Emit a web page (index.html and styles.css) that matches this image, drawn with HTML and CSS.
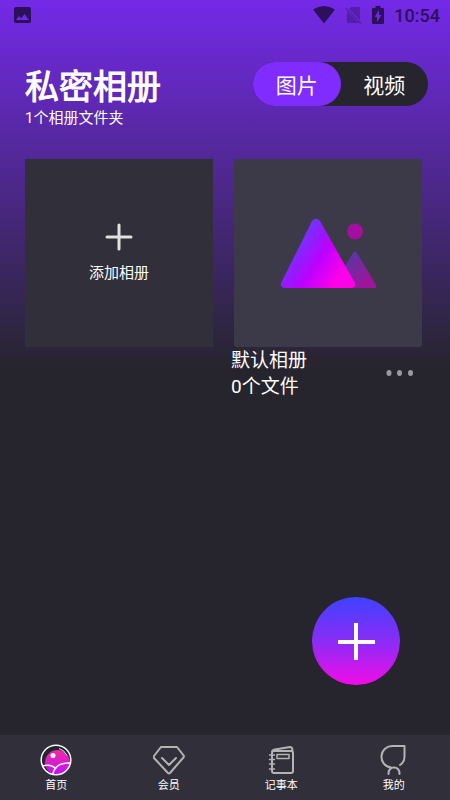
FILE: index.html
```html
<!DOCTYPE html>
<html lang="zh-CN">
<head>
<meta charset="utf-8">
<meta name="viewport" content="width=device-width, initial-scale=1">
<title>私密相册</title>
<link rel="stylesheet" href="styles.css">
</head>
<body>
<div class="app">
  <div class="status">
    <svg class="status-photo" width="17" height="16" viewBox="0 0 17 16"><path fill="currentColor" fill-rule="evenodd" d="M2 0h13q2 0 2 2v12q0 2-2 2H2q-2 0-2-2V2Q0 0 2 0zM2 13h13l-4.500-6-3.500 4.500-2-2.500z"/></svg>
    <div class="status-right">
      <svg width="22" height="18" viewBox="0 0 22 18"><path fill="currentColor" d="M0 3.500Q11-3.500 22 3.500L11 17.500z"/></svg>
      <svg class="dim" width="17" height="18" viewBox="0 0 17 18"><path fill="currentColor" d="M6 1h8q1 0 1 1v12L4 3zM2 5l12 12H3q-1 0-1-1z"/><path stroke="currentColor" stroke-width="1.500" d="M.5 2l15.500 15.500"/></svg>
      <svg width="12" height="18" viewBox="0 0 12 18"><path fill="currentColor" fill-rule="evenodd" d="M3.500 0h5v2H11q1 0 1 1v14q0 1-1 1H1q-1 0-1-1V3q0-1 1-1h2.500zM7 4l-4.500 7H5v5l4.500-7H7z"/></svg>
      <span class="clock">10:54</span>
    </div>
  </div>

  <header class="header">
    <div>
      <h1 class="title">私密相册</h1>
      <p class="subtitle">1个相册文件夹</p>
    </div>
    <div class="switch">
      <button class="switch-item active" type="button">图片</button>
      <button class="switch-item" type="button">视频</button>
    </div>
  </header>

  <main class="albums">
    <button class="add" type="button">
      <svg width="28" height="28" viewBox="0 0 28 28"><path d="M14 2v24M2 14h24" stroke="#e2e0e2" stroke-width="3" stroke-linecap="round"/></svg>
      <span>添加相册</span>
    </button>
    <section class="album">
      <div class="cover">
        <svg width="96" height="70" viewBox="0 0 96 70">
          <defs>
            <linearGradient id="big" gradientUnits="userSpaceOnUse" x1="18" y1="26" x2="62" y2="56"><stop offset="0" stop-color="#7630ff"/><stop offset=".5" stop-color="#bd00ff"/><stop offset="1" stop-color="#ff00e8"/></linearGradient>
            <linearGradient id="small" gradientUnits="userSpaceOnUse" x1="65" y1="42" x2="86" y2="66"><stop offset="0" stop-color="#5b35a4"/><stop offset="1" stop-color="#a0149b"/></linearGradient>
          </defs>
          <circle cx="75" cy="13.500" r="8" fill="#a3109f"/>
          <path fill="url(#small)" d="M73 35q2-3 4 0l19 32q1 3-1 3H56V63z"/>
          <path fill="url(#big)" d="M32 3Q36-2 40 3L75 65q1 5-4 5H5q-5 0-4-5z"/>
        </svg>
      </div>
      <div class="album-info">
        <div class="album-text"><h2>默认相册</h2><p>0个文件</p></div>
        <button class="more" type="button" aria-label="更多">
          <svg width="28" height="8" viewBox="0 0 28 8" fill="#9b999d"><ellipse cx="3" cy="3" rx="2.500" ry="3"/><ellipse cx="13.500" cy="3" rx="2.500" ry="3"/><ellipse cx="24.500" cy="3" rx="2.500" ry="3"/></svg>
        </button>
      </div>
    </section>
  </main>

  <button class="fab" type="button" aria-label="添加">
    <svg width="38" height="38" viewBox="0 0 38 38"><path d="M19 1v37M1 20h37" stroke="#fff" stroke-width="4"/></svg>
  </button>

  <nav class="tabs">
    <a class="tab" href="#home">
      <svg width="32" height="32" viewBox="0 0 32 32" fill="none">
        <defs>
          <linearGradient id="orb" x1="0" y1="0" x2="0" y2="1"><stop offset="0" stop-color="#ee2d9e"/><stop offset="1" stop-color="#c60cff"/></linearGradient>
          <clipPath id="ring"><circle cx="16" cy="16" r="14.500"/></clipPath>
        </defs>
        <circle cx="16" cy="16" r="15" fill="#25232f"/>
        <g clip-path="url(#ring)">
          <circle cx="17.500" cy="18.500" r="12.500" fill="url(#orb)"/>
          <path d="M1 22.500Q11 19 16 25" stroke="#fff" stroke-width="1.500"/>
          <path d="M12.500 32Q14 18 31 19" stroke="#fff" stroke-width="1.500"/>
        </g>
        <circle cx="16" cy="16" r="14.800" stroke="#fff" stroke-width="1.500"/>
        <path d="M19 4.500q5 1 8 7" stroke="#ddd" stroke-width="1"/>
        <circle cx="13" cy="11.500" r="2.500" fill="#fff"/>
      </svg>
      <span>首页</span>
    </a>
    <a class="tab" href="#vip">
      <svg width="32" height="32" viewBox="0 0 32 32" fill="none" stroke="#b5b3b5" stroke-width="2" stroke-linejoin="round" stroke-linecap="round"><path d="M8 3h16l7 9q0 1-1 2L17 29q-1 1-2 0L1 14q-1-1 0-2z"/><path d="M9 14l7 7 7-7"/></svg>
      <span>会员</span>
    </a>
    <a class="tab" href="#notes">
      <svg width="32" height="32" viewBox="0 0 32 32" fill="none" stroke="#b5b3b5" stroke-linejoin="round" stroke-linecap="round"><path stroke-width="2" d="M7 9q0-2 2-2h17q2 0 2 2v18q0 2-2 2H9q-2 0-2-2zM7 8q0-2 3-2.500L25 3q2.500 0 2.500 4"/><path stroke-width="1.500" d="M12 10.500h12v4H12z"/><path stroke-width="1.500" d="M4.500 11h5M4.500 15.500h5M4.500 20h5M4.500 25h5"/></svg>
      <span>记事本</span>
    </a>
    <a class="tab" href="#me">
      <svg width="32" height="32" viewBox="0 0 32 32" fill="none" stroke="#b5b3b5" stroke-width="2" stroke-linejoin="round" stroke-linecap="round"><path d="M22 21q4.500-3 4.500-8V2H15A10.800 10.800 0 0 0 13 23.500"/><path d="M10.500 30q0-6.500 5.500-6.500t5.500 6.500"/></svg>
      <span>我的</span>
    </a>
  </nav>
</div>
</body>
</html>
```
FILE: styles.css
```css
* { box-sizing: border-box; }

body, h1, h2, p { margin: 0; }

body {
  font-family: Roboto, "Noto Sans CJK SC", sans-serif;
  font-weight: 400;
  color: #fff;
  background: #26252d;
}

button {
  padding: 0;
  border: 0;
  background: none;
  color: inherit;
  font: inherit;
}

svg { display: block; }

.app {
  position: relative;
  display: flex;
  flex-direction: column;
  min-height: 100vh;
  background: linear-gradient(#7429e8 0, #54289c 150px, #26252d 370px);
}

.status {
  display: flex;
  justify-content: space-between;
  align-items: center;
  height: 30px;
  padding: 0 10px 0 14px;
  color: #2c105b;
}

.status-right {
  display: flex;
  align-items: center;
  gap: 10px;
}

.dim { opacity: 0.4; }

.clock {
  font-size: 18px;
  font-weight: 500;
}

.header {
  display: flex;
  justify-content: space-between;
  align-items: flex-start;
  padding: 32px 22px 0 25px;
}

.title {
  padding-top: 4px;
  font-size: 34px;
  font-weight: 400;
  line-height: 42px;
  -webkit-text-stroke: 1px currentColor;
}

.subtitle {
  font-size: 15px;
  line-height: 20px;
}

.switch {
  display: flex;
  width: 175px;
  height: 44px;
  border-radius: 22px;
  background: #26252d;
}

.switch-item {
  flex: 1;
  border-radius: 22px;
  font-size: 21px;
}

.switch-item.active { background: #812cff; }

.albums {
  display: grid;
  flex: 1;
  grid-template-columns: 1fr 1fr;
  align-items: start;
  gap: 21px;
  padding: 31px 28px 0 25px;
}

.add, .cover {
  display: flex;
  align-items: center;
  justify-content: center;
  width: 100%;
  aspect-ratio: 1;
}

.add {
  flex-direction: column;
  gap: 11px;
  background: #302f3a;
  font-size: 15px;
  line-height: 22px;
}

.cover {
  border-radius: 3px;
  background: #3c3a48;
}

.album-info {
  display: flex;
  align-items: center;
  justify-content: space-between;
  margin-left: -3px;
  padding-right: 8px;
}

.album-text {
  padding-top: 1px;
  font-size: 19px;
  line-height: 26px;
}

.album-text h2 {
  font-size: inherit;
  font-weight: inherit;
}

.fab {
  position: absolute;
  right: 50px;
  bottom: 115px;
  display: flex;
  align-items: center;
  justify-content: center;
  width: 88px;
  height: 88px;
  border-radius: 50%;
  background: linear-gradient(#3f42ff, #8a2cf5 50%, #f20ce8);
}

.tabs {
  display: grid;
  grid-template-columns: repeat(4, 1fr);
  height: 65px;
  background: #302f3a;
}

.tab {
  display: flex;
  flex-direction: column;
  align-items: center;
  padding-top: 9px;
  color: #fff;
  font-size: 11px;
  line-height: 20px;
  text-decoration: none;
}
```
